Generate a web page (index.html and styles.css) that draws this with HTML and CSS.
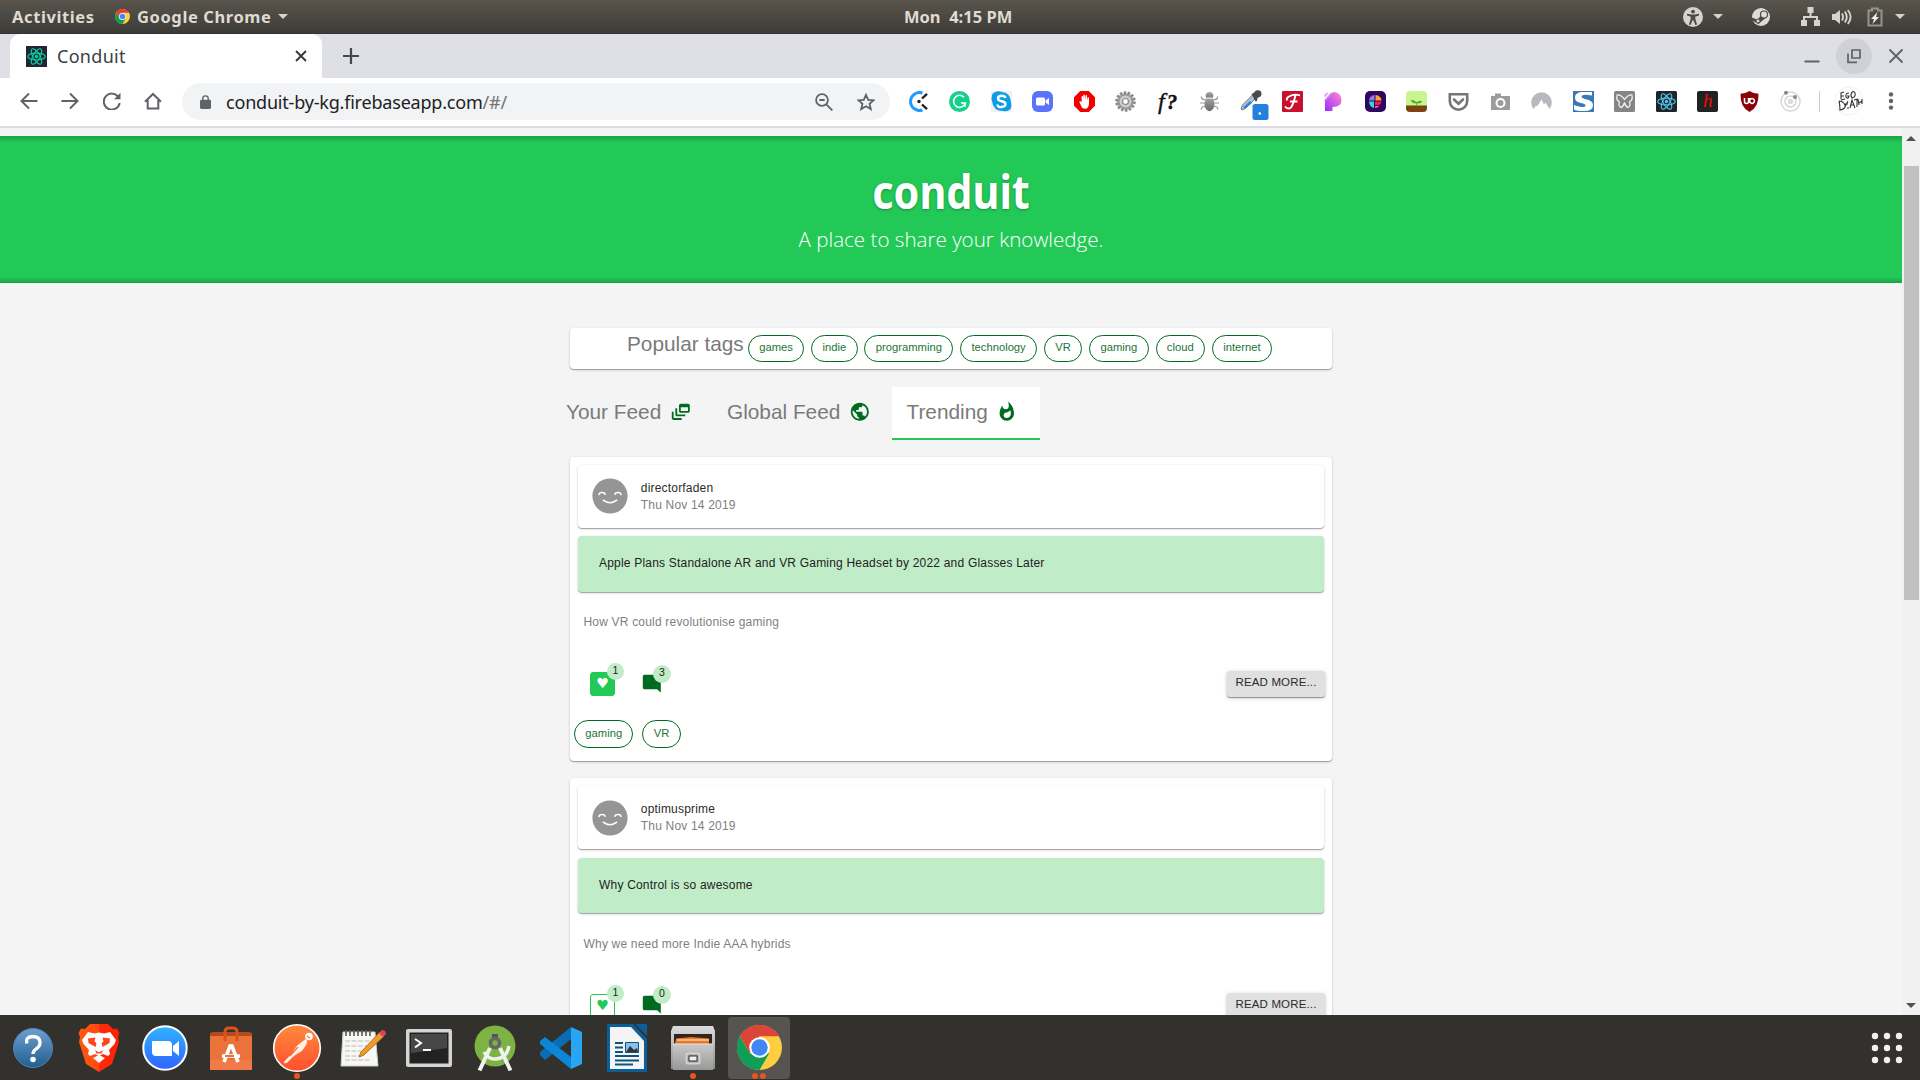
FILE: index.html
```html
<!DOCTYPE html>
<html lang="en">
<head>
<meta charset="utf-8">
<title>Conduit</title>
<link rel="stylesheet" href="styles.css">
</head>
<body>
<svg class="defs" aria-hidden="true">
  <defs>
    <linearGradient id="gBlue" x2="0" y2="1"><stop offset="0" stop-color="#2fb4ff"/><stop offset="1" stop-color="#2f63ff"/></linearGradient>
    <linearGradient id="gHelp" x2="0" y2="1"><stop offset="0" stop-color="#6f9fd0"/><stop offset="1" stop-color="#1f5f8f"/></linearGradient>
    <linearGradient id="gPost" x2="0" y2="1"><stop offset="0" stop-color="#ff8a3c"/><stop offset="1" stop-color="#ff4f2e"/></linearGradient>
    <linearGradient id="gPurple" x1="0" y1="1" x2="1" y2="0"><stop offset="0" stop-color="#9a2bff"/><stop offset="1" stop-color="#ff8ec8"/></linearGradient>
    <linearGradient id="gBrave" x2="1" y2="0"><stop offset="0" stop-color="#ff5a10"/><stop offset=".5" stop-color="#ff4a12"/><stop offset=".5" stop-color="#ff2a0e"/><stop offset="1" stop-color="#ff2000"/></linearGradient>
    <linearGradient id="gFiles" x2="0" y2="1"><stop offset="0" stop-color="#dcdcdc"/><stop offset="1" stop-color="#8d8d8d"/></linearGradient>
    <linearGradient id="gDrawer" x2="0" y2="1"><stop offset="0" stop-color="#c9c9c9"/><stop offset="1" stop-color="#989898"/></linearGradient>
    <linearGradient id="gBug" x2="0" y2="1"><stop offset="0" stop-color="#aaa"/><stop offset="1" stop-color="#666"/></linearGradient>
    <symbol id="react" viewBox="0 0 24 24"><g fill="none" stroke="currentColor" stroke-width="1.3"><ellipse cx="12" cy="12" rx="10" ry="3.9"/><ellipse cx="12" cy="12" rx="10" ry="3.9" transform="rotate(60 12 12)"/><ellipse cx="12" cy="12" rx="10" ry="3.9" transform="rotate(120 12 12)"/></g><circle cx="12" cy="12" r="2" fill="currentColor"/></symbol>
    <symbol id="chrome" viewBox="0 0 48 48"><circle cx="24" cy="24" r="24" fill="#ffcd40"/><path d="M3.2 12A24 24 0 0 1 44.8 12H24L13.6 30z" fill="#db4437"/><path d="M3.2 12A24 24 0 0 0 24 48l10.4-18L24 34 13.6 30z" fill="#0f9d58"/><circle cx="24" cy="24" r="11" fill="#fff"/><circle cx="24" cy="24" r="8.8" fill="#4285f4"/></symbol>
    <symbol id="smile" viewBox="0 0 36 36"><circle cx="18" cy="18" r="17.6" fill="#959595"/><g fill="none" stroke="#fff" stroke-width="1.5" stroke-linecap="round"><path d="M7 16.6q.3-2 3-2t3.100 1.700M22.900 16.300q.4-1.700 3.100-1.700t3 2M11.200 22.200q6.800 5.200 13.600 0"/></g></symbol>
    <symbol id="comment" viewBox="0 0 24 24"><path fill="currentColor" d="M21.990 4c0-1.100-.89-2-1.990-2H4c-1.100 0-2 .9-2 2v12c0 1.100.9 2 2 2h14l4 4-.01-18z"/></symbol>
  </defs>
</svg>

<header class="topbar">
  <span class="activities">Activities</span>
  <svg class="mini-chrome"><use href="#chrome"/></svg>
  <span class="app-name">Google Chrome</span><i class="caret"></i>
  <time class="clock">Mon&nbsp; 4:15 PM</time>
  <div class="status">
    <svg class="s-acc" viewBox="0 0 20 20"><circle cx="10" cy="10" r="10" fill="#d5d3cf"/><g fill="#4c4a44"><circle cx="10" cy="4.600" r="1.900"/><path d="M4 6.800l4.300.8h3.400l4.300-.8v1.700l-3.800 1.200.3 2.800 1.600 5-1.700.4-2-4.700h-.8l-2 4.700-1.700-.4 1.600-5 .3-2.800L4 8.500z"/></g></svg>
    <i class="caret c1"></i>
    <svg class="s-steam" viewBox="0 0 18 18"><circle cx="9" cy="9" r="9" fill="#dddbd7"/><path d="M0 9.500l5.500 2.200 3.500-4.500 5 2.500-5.500 4.500-2 2L0 12z" fill="#4c4a44"/><circle cx="12" cy="6.500" r="3.500" fill="#ddd" stroke="#4c4a44" stroke-width="1.200"/><circle cx="6" cy="13" r="2" fill="#ddd" stroke="#4c4a44"/></svg>
    <svg class="s-net" viewBox="0 0 19 19"><path fill="#d5d3cf" d="M6.500 0h6v6h-2v3h6.500v4h2v6h-6v-6h2v-2h-11v2h2v6H0v-6h2V9h6.500V6h-2z"/></svg>
    <svg class="s-vol" viewBox="0 0 20 16"><path fill="#d5d3cf" d="M0 5h3l5-4v14l-5-4H0z"/><g fill="none" stroke="#d5d3cf" stroke-width="1.900"><path d="M10 4.500q2 3.500 0 7M12.800 2.500q4 5.500 0 11M15.800 1q5.600 7 0 14"/></g></svg>
    <svg class="s-bat" viewBox="0 0 16 20"><path fill="none" stroke="#96938c" stroke-width="2" d="M1.500 3.500H5v-2h6v2h3.500v15h-13z"/><path fill="#eee" d="M10.500 5L4 12h3l-1.500 5L12 10H9z"/></svg>
    <i class="caret c2"></i>
  </div>
</header>

<div class="tabstrip">
  <div class="tab">
    <span class="favicon"><svg><use href="#react"/></svg></span>
    <span class="tab-title">Conduit</span>
    <svg class="tab-close" viewBox="0 0 12 12"><path d="M1 1l10 10M11 1L1 11" stroke="#333" stroke-width="1.800"/></svg>
  </div>
  <svg class="new-tab" viewBox="0 0 16 16"><path d="M8 0v16M0 8h16" stroke="#45484c" stroke-width="2.200"/></svg>
  <div class="win">
    <span class="win-btn"><svg viewBox="0 0 16 16"><path d="M.5 13.500h15" stroke="#5f6368" stroke-width="2"/></svg></span>
    <span class="win-btn hover"><svg viewBox="0 0 16 16"><g fill="none" stroke="#5f6368" stroke-width="1.700"><path d="M6 2h8v8H6z"/><path d="M2 5.500v8.800h9"/></g></svg></span>
    <span class="win-btn"><svg viewBox="0 0 16 16"><path d="M1.500 1.500l13 13M14.500 1.500l-13 13" stroke="#5f6368" stroke-width="1.900"/></svg></span>
  </div>
</div>

<div class="toolbar">
  <div class="nav">
    <span><svg viewBox="0 0 18 18"><path d="M17.500 9H2M9 1.500L1.500 9 9 16.500" /></svg></span>
    <span><svg viewBox="0 0 18 18"><path d="M.5 9H16M9 1.500L16.500 9 9 16.500"/></svg></span>
    <span><svg viewBox="0 0 18 18"><path d="M15.500 5.200A8 8 0 1 0 16.700 11"/><path d="M17.500.8v6.500H11z" class="solid"/></svg></span>
    <span><svg viewBox="0 0 18 18"><path d="M1 9.700L9 2l8 7.700M3.700 8v8.500h10.600V8"/></svg></span>
  </div>
  <div class="omnibox">
    <svg class="lock" viewBox="0 0 12 15"><path fill="#5f6368" d="M1.500 5H10.500Q12 5 12 6.500v7q0 1.500-1.500 1.500h-9Q0 15 0 13.500v-7Q0 5 1.500 5z"/><path d="M3 6V3.800a3 3 0 0 1 6 0V6" fill="none" stroke="#5f6368" stroke-width="1.500"/></svg>
    <span class="url">conduit-by-kg.firebaseapp.com<span class="path">/#/</span></span>
    <svg class="zoomicon" viewBox="0 0 18 18"><circle cx="7" cy="7" r="5.900"/><path d="M11.300 11.300l6 6M4.300 7h5.400"/></svg>
    <svg class="star" viewBox="0 0 18 18"><path d="M9 1.800l2.200 5 5.400.5-4.100 3.500 1.300 5.300L9 13.200l-4.800 2.900 1.300-5.300L1.400 7.300l5.400-.5z"/></svg>
  </div>
  <div class="exts">
    <span><svg viewBox="0 0 21 21"><path d="M14.500 2A9 9 0 1 0 14.500 19" fill="none" stroke="#1e9bff" stroke-width="3"/><circle cx="11" cy="10.500" r="1.700" fill="#222"/><path d="M14 7.500L19 2.800M14 13.500l5 4.700" stroke="#222" stroke-width="2.400"/></svg></span>
    <span><svg viewBox="0 0 21 21"><circle cx="10.500" cy="10.500" r="10.500" fill="#11d18d"/><path d="M15 6.300a6 6 0 1 0 1.300 5.700H12M16 12v4" fill="none" stroke="#fff" stroke-width="1.600"/></svg></span>
    <span><svg viewBox="0 0 21 21"><path fill="#f0f0f0" d="M0 0h21v21H0z"/><path d="M6 .5q3-.5 5 .6Q20 2 20 12q1 3-.5 6-3 3-7 2Q2 20 1 10 0 8 1 4 2 1 6 .5z" fill="#0d9ce8"/><path d="M14.500 7q-.5-2.300-4-2.300T7 7.500q0 2 3.700 2.700t3.800 2.900-3.800 2.900T6.500 13.500" stroke="#fff" stroke-width="2.400" fill="none"/></svg></span>
    <span><svg viewBox="0 0 21 21"><rect width="21" height="21" rx="6" fill="#5b73fa"/><rect x="4" y="6.500" width="9" height="8" rx="1.500" fill="#fff"/><path d="M13.500 9.500l3.500-2.500v7l-3.500-2.500z" fill="#fff"/></svg></span>
    <span><svg viewBox="0 0 21 21"><path d="M6.200 0h8.600L21 6.200v8.600L14.800 21H6.200L0 14.800V6.200z" fill="#f20000"/><path d="M6 10l1.600 1.300V5.500q.8-1 1.500 0V9l.3-5q.7-1 1.400 0l.3 5 .5-4.500q.8-.8 1.400 0V9.500l.7-3q.8-.7 1.300.3v6q-.4 5-4 5-3 0-4-3.300L5.300 11z" fill="#fff"/></svg></span>
    <span><svg viewBox="0 0 21 21"><circle cx="10.500" cy="10.500" r="8.700" fill="#b9b9b9" stroke="#8a8a8a" stroke-width="3.200" stroke-dasharray="2.400 1.500"/><circle cx="10.500" cy="10.500" r="6.600" fill="#ccc" stroke="#888"/><circle cx="10.500" cy="10.500" r="3" fill="#fff" stroke="#888" stroke-width="1.200"/></svg></span>
    <span class="fq"><b>f<small>?</small></b></span>
    <span><svg viewBox="0 0 21 21"><g fill="none" stroke="#999" stroke-width="1.100"><path d="M2 5.500q1 4 5 3M19 5.500q-1 4-5 3M1 12h5M20 12h-5M2 18.500q1-4 5-3M19 18.500q-1-4-5-3"/></g><circle cx="10.500" cy="4.800" r="3.800" fill="url(#gBug)"/><ellipse cx="10.500" cy="13" rx="5" ry="7.200" fill="url(#gBug)"/><path d="M6 7.200h9" stroke="#eee"/></svg></span>
    <span class="dropper"><svg viewBox="0 0 30 30"><path d="M2 19l1.500-4L14 4.500l3.500 3L7 18l-4 2z" fill="#a8c4dc" stroke="#777"/><path d="M4 17.500L11 11l2 2-7 5.500z" fill="#2f84d8"/><path d="M12.500 4l2-1 2.500-2.500q3-1 5 1 1.200 3-.5 5L18.500 8l-.5 3-1.500.5z" fill="#4a4a4a"/><rect x="13.500" y="14" width="16" height="16" rx="2.500" fill="#2480dc"/><circle cx="20.800" cy="23.500" r="1.300" fill="#fff"/></svg></span>
    <span><svg viewBox="0 0 21 21"><rect width="21" height="21" rx="1" fill="#c9102c"/><path d="M7 5.500Q12 2.500 18 4.300M13.500 4q-2 9-4.500 12.500-3.500 2.500-6-1M8 10.500h7.500M7 5.500q-3 1.500-2 4" fill="none" stroke="#fff" stroke-width="1.900"/></svg></span>
    <span><svg viewBox="0 0 21 21"><path d="M2 20V9L10 1q8 0 8.500 7.500T9.500 16v4z" fill="url(#gPurple)"/><path d="M1.500 5.500l3-3.500M1.500 10l7-8" stroke="#d88af5" stroke-width="1.500"/></svg></span>
    <span><svg viewBox="0 0 21 21"><rect width="21" height="21" rx="5" fill="#2f0661"/><path d="M9.500 4v5.500H4Q4.500 4.500 9.500 4z" fill="#8d7bf0"/><path d="M10.500 4q5.500.5 6 5.500h-6z" fill="#ffa51f"/><path d="M10 10.500h6.500Q16 14 13 14h-3z" fill="#ff1658"/><path d="M4 10.500h5v6.500Q4.500 16 4 10.500z" fill="#27dfc1"/><path d="M10 15h4.500q-2 2-4.500 2z" fill="#ff5ba0"/></svg></span>
    <span><svg viewBox="0 0 21 21"><rect width="21" height="21" rx="4" fill="#c8f58f"/><path d="M0 14.500h21V17q0 4-4 4H4q-4 0-4-4z" fill="#7d430e"/><path d="M10.500 14v-3M10.500 12Q6.500 12.500 5 9.500q4-.5 5.500 2.500zM10.500 12q4 .5 5.500-1.500-3.500-1-5.500 1.500z" fill="#3fae1c" stroke="#3fae1c" stroke-width=".8"/></svg></span>
    <span><svg viewBox="0 0 21 21"><path d="M1.800 3.200h17.400V10a8.700 8.700 0 0 1-17.400 0z" fill="none" stroke="#757575" stroke-width="2.600"/><path d="M6 8.500l4.500 4.300L15 8.500" fill="none" stroke="#757575" stroke-width="2.600" stroke-linecap="round"/></svg></span>
    <span><svg viewBox="0 0 21 21"><path d="M1 5h4V2.500h6V5h9v14H1z" fill="#9c9c9c"/><circle cx="10.500" cy="12" r="4" fill="#9c9c9c" stroke="#fff" stroke-width="2"/></svg></span>
    <span><svg viewBox="0 0 21 21"><path d="M2.500 18A10.300 10.300 0 1 1 18.500 18l-4-6.500-1.500 2-2.500-5-4.500 7-1-1z" fill="#b7b9be"/></svg></span>
    <span><svg viewBox="0 0 21 21"><path fill="#3c78b8" d="M0 0h21v21H0z"/><path d="M19 1v3.500Q9 2.500 8.500 5.500 8.500 7.500 14 8.500q6 1.500 6 5.500 0 6.500-10 6-6 0-9-1.500V14q10 3.500 11.500 1 .5-2-4.500-3-6-1-6-5.500 0-5.500 8-5.500z" fill="#fff"/></svg></span>
    <span><svg viewBox="0 0 21 21"><rect width="21" height="21" rx="1.500" fill="#858585"/><path d="M10.500 8.500Q7 3.500 3 4q-1 5 2.500 7-1.500 4 1.500 5.500 2.500-1 3.500-5 1 4 3.500 5 3-1.500 1.500-5.500Q19 9 18 4q-4-.5-7.500 4.500z" fill="none" stroke="#f4f4f4" stroke-width="1.200"/></svg></span>
    <span><svg viewBox="0 0 21 21" color="#4fc3ea"><rect width="21" height="21" rx="1.500" fill="#202327"/><use href="#react" width="21" height="21"/></svg></span>
    <span class="h-ext"><b>h</b></span>
    <span><svg viewBox="0 0 21 21"><path d="M10.500 0q4 2.500 9 2.700Q20 16 10.500 21 1 16 1.500 2.700 6.500 2.500 10.500 0z" fill="#8a0209"/><path d="M5.500 7v3.500q0 2 2 2t2-2V7M13 7.600a2.400 2.400 0 1 0 .1 0M10.700 7v5" fill="none" stroke="#fff" stroke-width="1.500"/></svg></span>
    <span><svg viewBox="0 0 21 21"><g fill="none" stroke="#d6d6d6" stroke-width="1.500"><circle cx="10.500" cy="10.500" r="9.500"/><circle cx="10.500" cy="10.500" r="5.500"/></g><circle cx="10.500" cy="10.500" r="2.700" fill="#dcdcdc"/><circle cx="6" cy="1.800" r="2" fill="#888"/><circle cx="15" cy="6" r="2" fill="#888"/></svg></span>
  </div>
  <i class="sep"></i>
  <svg class="avatar" viewBox="0 0 30 30"><circle cx="15" cy="15" r="14" fill="#fff" stroke="#f1f1f1"/><path d="M7 13V7l3-1M7 10h3M7 14l4-1M15 7q-4 0-3 4 2 3 3-1h-2M18 6q-2 3 0 6 4-1 3-5-1-2-3-1M5 15q1 4 1 9 6-1 5-5-2-4-6-4M14 15l-3 6M11 18h3M13 22h2M16 22l2-8 3 8M17 19h3M20 14l4-1M23 13v8M24 13l1 6M25 17l3-2M28 13v5" fill="none" stroke="#333" stroke-width="1.100"/></svg>
  <svg class="dots" viewBox="0 0 6 18"><g fill="#5f6368"><circle cx="3" cy="2.400" r="2.200"/><circle cx="3" cy="9" r="2.200"/><circle cx="3" cy="15.600" r="2.200"/></g></svg>
</div>

<div class="viewport">
  <div class="page">
    <section class="banner">
      <h1>conduit</h1>
      <p>A place to share your knowledge.</p>
    </section>
    <main class="content">
      <section class="tags-card card">
        <h2>Popular tags</h2>
        <span class="chip">games</span><span class="chip">indie</span><span class="chip">programming</span><span class="chip">technology</span><span class="chip">VR</span><span class="chip">gaming</span><span class="chip">cloud</span><span class="chip">internet</span>
      </section>
      <nav class="feeds">
        <a class="feed f1">Your Feed<svg viewBox="0 0 24 24"><path d="M8 8H6v7c0 1.100.9 2 2 2h9v-2H8V8z"/><path d="M20 3h-8c-1.100 0-2 .9-2 2v6c0 1.100.9 2 2 2h8c1.100 0 2-.9 2-2V5c0-1.100-.9-2-2-2zm0 8h-8V7h8v4z"/><path d="M4 12H2v7c0 1.100.9 2 2 2h9v-2H4v-7z"/></svg></a>
        <a class="feed f2">Global Feed<svg viewBox="0 0 24 24"><path d="M12 2C6.480 2 2 6.480 2 12s4.480 10 10 10 10-4.480 10-10S17.520 2 12 2zm-1 17.930c-3.950-.49-7-3.850-7-7.930 0-.62.08-1.210.21-1.790L9 15v1c0 1.100.9 2 2 2v1.930zm6.900-2.540c-.26-.81-1-1.390-1.900-1.390h-1v-3c0-.55-.45-1-1-1H8v-2h2c.55 0 1-.45 1-1V7h2c1.100 0 2-.9 2-2v-.41c2.930 1.190 5 4.060 5 7.410 0 2.080-.8 3.970-2.100 5.390z"/></svg></a>
        <a class="feed f3 active">Trending<svg viewBox="0 0 24 24"><path d="M13.500.67s.74 2.650.74 4.800c0 2.060-1.350 3.730-3.410 3.730-2.070 0-3.630-1.670-3.630-3.730l.03-.36C5.210 7.510 4 10.620 4 14c0 4.420 3.580 8 8 8s8-3.580 8-8C20 8.610 17.410 3.800 13.500.67zM11.710 19c-1.780 0-3.220-1.400-3.220-3.140 0-1.620 1.050-2.760 2.810-3.120 1.770-.36 3.600-1.210 4.620-2.580.39 1.290.59 2.650.59 4.040 0 2.650-2.150 4.800-4.800 4.800z"/></svg></a>
      </nav>
      <article class="post card">
        <div class="author card"><svg><use href="#smile"/></svg><div><b>directorfaden</b><span>Thu Nov 14 2019</span></div></div>
        <h3 class="card">Apple Plans Standalone AR and VR Gaming Headset by 2022 and Glasses Later</h3>
        <p>How VR could revolutionise gaming</p>
        <div class="actions">
          <span class="like filled"><i>♥</i><em>1</em></span>
          <span class="talk"><svg><use href="#comment"/></svg><em>3</em></span>
          <button>READ MORE...</button>
        </div>
        <div class="chips"><span class="chip">gaming</span><span class="chip">VR</span></div>
      </article>
      <article class="post card">
        <div class="author card"><svg><use href="#smile"/></svg><div><b>optimusprime</b><span>Thu Nov 14 2019</span></div></div>
        <h3 class="card">Why Control is so awesome</h3>
        <p>Why we need more Indie AAA hybrids</p>
        <div class="actions">
          <span class="like"><i>♥</i><em>1</em></span>
          <span class="talk"><svg><use href="#comment"/></svg><em>0</em></span>
          <button>READ MORE...</button>
        </div>
      </article>
    </main>
  </div>
  <div class="scrollbar"><i class="up"></i><i class="thumb"></i><i class="down"></i></div>
</div>

<footer class="dock">
  <span><svg width="42" height="42" viewBox="0 0 42 42"><circle cx="21" cy="21" r="19.500" fill="url(#gHelp)" stroke="#4f84b5"/><path d="M15 16.500Q13 10 20.500 9.500 28 9.500 28 15.500q0 4-4 6.500-3 2-3 5" fill="none" stroke="#fff" stroke-width="3.300"/><circle cx="21" cy="32.500" r="2.800" fill="#fff"/></svg></span>
  <span><svg width="42" height="48" viewBox="0 0 42 48"><path d="M12 0h18l5 5 4-.5 2.500 4.500L40 13l1 5-7 22-13 8-13-8L1 18l1-5L.5 9 3 4.500 7 5z" fill="url(#gBrave)"/><path d="M10 8l6 1.500 5-1 5 1L32 8l6 8-1.500 4L31 26l1 4-2 2-5-2-4 2-4-2-5 2-2-2 1-4-5.500-6L4 16z" fill="#fff"/><path d="M10 14.500l7.500-1-1 4 2 1.500-1 4-7-4zM32 14.500l-7.500-1 1 4-2 1.500 1 4 7-4zM17 26l4 2.500L25 26l-1.500 3.500h-5z" fill="#ff431a"/><path d="M15 34l6-3 6 3-6 5z" fill="#fff"/></svg></span>
  <span><svg width="46" height="46" viewBox="0 0 46 46"><circle cx="23" cy="23" r="21.700" fill="url(#gBlue)" stroke="#fff" stroke-width="2"/><path d="M10 16h16q4 0 4 4v11H14q-4 0-4-4zM31 21l6-5v15l-6-5z" fill="#fff"/></svg></span>
  <span><svg width="44" height="46" viewBox="0 0 44 46"><path d="M1 8l3-1h36l3 1v6H1z" fill="#b64a1b"/><path d="M1 11h42v34H1z" fill="#e9733a"/><path d="M1 35h42v10H1z" fill="#f07b49"/><path d="M16 16V7q0-4 4-4h4q4 0 4 4v9" fill="none" stroke="#d9531e" stroke-width="3"/><path d="M15 37l6-16h2l6 16M13 31h18" stroke="#fff" stroke-width="3.600" fill="none"/><path d="M16 31h9" stroke="#d9531e" stroke-width="1.600"/></svg></span>
  <span><svg width="50" height="50" viewBox="0 0 50 50"><circle cx="25" cy="25" r="23.300" fill="url(#gPost)" stroke="#fff" stroke-width="1.600"/><circle cx="37" cy="13.500" r="3.800" fill="#fff"/><path d="M33.500 16.500L25 23l-5 8-7 7-1 2 3-.5 7-7 8-5 4-6 1-4z" fill="#fff3e8" stroke="#fff" stroke-width=".6"/><path d="M18 33l8-9M35 13l3 2" stroke="#ff6a35" stroke-width="1.200"/></svg><i class="run"></i></span>
  <span><svg width="46" height="42" viewBox="0 0 46 42"><path d="M3 5h32l3 34H1z" fill="#f7f7f5" stroke="#ccc"/><g stroke="#bbb" stroke-width="1.200" stroke-dasharray="5 1.500"><path d="M5 14h26M5 19h22M5 24h16M5 29h14M5 33h26"/></g><path d="M6 3v6M10 3v6M14 3v6M18 3v6M22 3v6M26 3v6M30 3v6" stroke="#555" stroke-width="1.600" /><path d="M40 5l4 4-20 19-5 2 2-5z" fill="#f09a2b" stroke="#b8701a"/><path d="M39 6l3-3q4 0 4 4l-3 3z" fill="#d9455a"/></svg></span>
  <span><svg width="46" height="38" viewBox="0 0 46 38"><rect width="46" height="38" rx="2" fill="#d4d4d4"/><rect x="3.500" y="3.500" width="39" height="31" fill="#222"/><path d="M5 5h36v14L5 24z" fill="#474747"/><path d="M9 10l6 4-6 4.500M17 21h8" fill="none" stroke="#fff" stroke-width="2"/></svg></span>
  <span><svg width="42" height="48" viewBox="0 0 42 48"><circle cx="21" cy="22" r="20.500" fill="#7cb342"/><path d="M16 24L5.500 46.500M26 24l10.500 22.500" stroke="#f1f1f1" stroke-width="4"/><path d="M10 28q4 7.500 12 7 11-1 13-13" stroke="#f1f1f1" stroke-width="3.500" fill="none"/><path d="M18 10h6v5h-6z" fill="#555"/><circle cx="21" cy="19" r="4.500" fill="none" stroke="#666" stroke-width="3.600"/></svg></span>
  <span><svg width="44" height="44" viewBox="0 0 44 44"><path d="M32 1l11 5v32l-11 5z" fill="#2aa4f4"/><path d="M32 1v12L6 34l-5-5v-3z" fill="#0a6db4"/><path d="M32 43V31L6 11l-5 4v3z" fill="#0c86d6"/></svg></span>
  <span><svg width="42" height="50" viewBox="0 0 42 50"><path d="M2 1h25l14 15v33H1V2z" fill="#0b5f98"/><path d="M4 4h21l13 14v28H4z" fill="#f4f4f4"/><path d="M29 1h11q1 0 1 1v11z" fill="#0b5f98"/><path d="M9 20h8M9 24.500h8M9 29h8M9 33h24M9 37.500h24M9 41.500h18" stroke="#0b5580" stroke-width="2"/><path d="M19.500 19.500h13v10h-13z" fill="#85c1ef" stroke="#0b5580"/><path d="M20 29l4-6 4 4 3-2 1 4z" fill="#333"/></svg></span>
  <span><svg width="44" height="46" viewBox="0 0 44 46"><path d="M2 1h40l2 5v38H0V6z" fill="url(#gFiles)"/><path d="M3 9h38v10H3z" fill="#33251b"/><path d="M5 13.500l15-1.500 18 1.500V19H4z" fill="#e9762b"/><path d="M6 15h32" stroke="#ffe2b8" stroke-width="1.200"/><path d="M2 19h40v26H2z" fill="url(#gDrawer)"/><path d="M2 19h40" stroke="#e3e3e3"/><rect x="15.500" y="28.500" width="13" height="10" rx="1.500" fill="#999" stroke="#d2d2d2" stroke-width="2"/><path d="M18 31h8v5h-8z" fill="#eee" stroke="#333"/></svg><i class="run"></i></span>
  <span class="current"><svg width="45" height="45"><use href="#chrome"/></svg><i class="run two"></i></span>
  <svg class="grid" width="32" height="32" viewBox="0 0 32 32"><g fill="#f2f1ee"><circle cx="4" cy="4" r="3.200"/><circle cx="16" cy="4" r="3.200"/><circle cx="28" cy="4" r="3.200"/><circle cx="4" cy="16" r="3.200"/><circle cx="16" cy="16" r="3.200"/><circle cx="28" cy="16" r="3.200"/><circle cx="4" cy="28" r="3.200"/><circle cx="16" cy="28" r="3.200"/><circle cx="28" cy="28" r="3.200"/></g></svg>
</footer>
</body>
</html>
```
FILE: styles.css
```css
* { box-sizing: border-box; }
html, body { margin: 0; height: 100%; }
body {
  display: flex;
  flex-direction: column;
  width: 1920px;
  height: 1080px;
  overflow: hidden;
  background: #f4f4f4;
  font-family: "Liberation Sans", Arial, sans-serif;
}
.defs { position: absolute; width: 0; height: 0; }
i, em { font-style: normal; }

/* desktop top bar */
.topbar {
  display: grid;
  grid-template-columns: 103px 22px 137px 1fr auto;
  align-items: center;
  flex: none;
  position: relative;
  height: 34px;
  padding-left: 12px;
  background: linear-gradient(#59554d, #3d3b37);
  border-bottom: 1px solid #38313a;
  color: #dfdbd2;
  font: 700 16.500px/33px "Noto Sans", sans-serif;
  white-space: nowrap;
}
.activities, .app-name { letter-spacing: .6px; }
.mini-chrome { width: 15px; height: 15px; }
.clock { position: absolute; left: 904px; top: 0; }
.caret {
  width: 0;
  border: 5px solid transparent;
  border-top-color: #d5d3cf;
  border-bottom: 0;
  margin-left: 4px;
}
.status { display: flex; align-items: center; width: 237px; height: 33px; }
.status svg { flex: none; }
.s-acc { width: 20px; height: 20px; }
.status .c1 { margin: 0 0 0 10px; }
.s-steam { width: 18px; height: 18px; margin-left: 29px; }
.s-net { width: 19px; height: 19px; margin-left: 31px; }
.s-vol { width: 20px; height: 16px; margin-left: 12px; }
.s-bat { width: 16px; height: 20px; margin-left: 15px; }
.status .c2 { margin: 0 0 0 12px; }

/* browser tab strip */
.tabstrip {
  display: flex;
  align-items: center;
  flex: none;
  height: 44px;
  padding-left: 10px;
  background: #dee0e6;
}
.tab {
  display: flex;
  align-items: center;
  width: 312px;
  height: 44px;
  padding: 0 15px 0 16px;
  background: #fff;
  border-radius: 10px 10px 0 0;
}
.favicon { width: 21px; height: 21px; background: #222533; color: #08d0a0; }
.favicon svg { display: block; width: 21px; height: 21px; }
.tab-title { flex: 1; padding-left: 10px; font: 18px/44px "Noto Sans", sans-serif; letter-spacing: .3px; color: #3c4043; }
.tab-close { width: 12px; height: 12px; }
.new-tab { width: 16px; height: 16px; margin-left: 21px; }
.win { display: flex; gap: 6px; margin-left: auto; padding-right: 6px; }
.win-btn { display: grid; place-items: center; width: 36px; height: 36px; border-radius: 50%; }
.win-btn svg { width: 16px; height: 16px; }
.win-btn.hover { background: #d0d1d6; }

/* browser toolbar */
.toolbar {
  display: flex;
  align-items: center;
  flex: none;
  height: 50px;
  padding: 0 0 2px 8px;
  background: #fff;
  border-bottom: 2px solid #dcdce1;
}
.nav { display: flex; }
.nav span { display: grid; place-items: center; width: 41.500px; height: 40px; }
.nav svg { width: 18px; height: 18px; fill: none; stroke: #5f6368; stroke-width: 2; }
.nav .solid { fill: #5f6368; stroke: none; }
.omnibox {
  display: flex;
  align-items: center;
  width: 708px;
  height: 37px;
  margin: 1px 0 0 8px;
  padding: 0 15px 0 18px;
  border-radius: 19px;
  background: #f1f3f4;
}
.lock { width: 11px; height: 14px; }
.url { flex: 1; padding-left: 15px; font: 18px/36px "Noto Sans", sans-serif; letter-spacing: -.2px; color: #202124; }
.path { color: #70757a; }
.zoomicon, .star { width: 18px; height: 18px; fill: none; stroke: #5f6368; stroke-width: 1.800; }
.star { margin-left: 24px; }
.exts { display: flex; margin-left: 7.400px; }
.exts span { display: grid; place-items: center; width: 41.570px; height: 40px; }
.exts svg { width: 21px; height: 21px; }
.exts .fq b { font: italic 400 24px/36px "Liberation Serif", serif; color: #111; -webkit-text-stroke: .4px #111; }
.fq small { margin-left: 2px; font-size: 21px; font-weight: 700; }
.exts .dropper { place-items: start; padding: 9px 0 0 9px; }
.exts .dropper svg { width: 30px; height: 30px; }
.h-ext b { width: 21px; height: 21px; border-radius: 2px; background: #222; color: #f00c0c; font: italic 400 19px/20px "Liberation Serif", serif; text-align: center; }
.sep { width: 1px; height: 21px; margin-left: 7.600px; background: #ccc; }
.avatar { width: 30px; height: 30px; margin-left: 14px; }
.dots { width: 6px; height: 18px; margin-left: 24px; }

/* page */
.viewport { display: flex; flex: none; height: 887px; overflow: hidden; }
.page { width: 1902px; padding-top: 8px; overflow: hidden; }
.banner {
  height: 147px;
  padding-top: 23px;
  background: linear-gradient(rgba(0,0,0,.2), transparent 7px, transparent 141px, rgba(0,0,0,.2)) #23c957;
  color: #fff;
  text-align: center;
}
.banner h1 { margin: 0; font: 700 47px/64px "Noto Sans", sans-serif; text-shadow: 0 1px 3px rgba(0,0,0,.3); transform: scaleX(.88); }
.banner p { margin: 0; font: 300 20.600px/32px "Open Sans", sans-serif; }
.content { width: 762px; margin: 45px auto 0; }
.card {
  border-radius: 4px;
  background: #fff;
  box-shadow: 0 1px 0 rgba(0,0,0,.24), 0 1px 3px rgba(0,0,0,.2);
}
.tags-card { display: flex; gap: 6.900px; height: 41px; padding: 7px 0 0 57px; }
.tags-card h2 { width: 114px; margin: -3px 0 0; white-space: nowrap; font-size: 20.800px; line-height: 24px; font-weight: 400; color: #7a7a7a; }
.chip {
  height: 27px;
  padding: 0 10.350px;
  border: 1px solid #006b1f;
  border-radius: 14px;
  color: #1c7533;
  font-size: 11.220px;
  line-height: 23px;
}
.feeds { display: flex; width: 500px; height: 53px; margin: 18px 0 16.800px -19px; }
.feed { display: flex; align-items: center; padding: 0 0 3px 15px; font-size: 20.800px; color: #7a7a7a; white-space: nowrap; }
.feed svg { width: 21.600px; height: 21.600px; margin-left: 8.500px; fill: #006b1f; }
.f1 { width: 161px; }
.f2 { width: 180px; }
.f3 { width: 148px; }
.feed.active { padding: 0 0 1px 14.500px; background: #fff; border-bottom: 2px solid #23c957; }
.post { height: 304.500px; margin-bottom: 17px; padding: 8.100px 8px; }
.author { display: flex; align-items: center; height: 62.800px; padding-left: 13.500px; }
.author svg { width: 36px; height: 36px; }
.author b, .author span { display: block; font-size: 12px; line-height: 17px; letter-spacing: .19px; font-weight: 400; color: #2c2c2c; }
.author div { padding: .8px 0 0 13.300px; }
.author div span { color: #808080; }
.post h3 { height: 55.700px; margin: 8.400px 0 0; padding: .4px 0 0 21px; background: #c1ecc8; font-size: 12px; line-height: 55px; letter-spacing: .2px; font-weight: 400; color: #222; }
.post p { margin: 20.400px 0 0 5.500px; font-size: 12px; line-height: 20px; letter-spacing: .19px; color: #808080; }
.actions { display: flex; height: 26px; margin-top: 39.100px; padding-left: 12px; }
.like, .talk { position: relative; }
.like { width: 25px; height: 24px; margin-top: 1px; border: 1px solid #23c957; border-radius: 3px; color: #23c957; text-align: center; }
.like i { display: block; font: 14px/20px "DejaVu Sans", sans-serif; }
.like.filled { background: #23c957; color: #fff; }
.actions em { position: absolute; width: 17px; height: 17px; border-radius: 50%; background: #c1ecc8; color: #222; font-size: 10.500px; line-height: 15px; text-align: center; }
.like em { left: 16px; top: -10px; }
.talk { width: 22px; height: 22px; margin: 1.500px 0 0 26px; }
.talk svg { width: 21.600px; height: 21.600px; color: #006b1f; }
.talk em { left: 12px; top: -8px; width: 18px; height: 18px; }
.actions button {
  width: 98px;
  height: 26px;
  margin: 0 -1px 0 auto;
  padding: 0 0 4px;
  border: 0;
  border-radius: 3px;
  background: #e0e0e0;
  box-shadow: 0 1px 1px rgba(0,0,0,.35), 0 1px 4px rgba(0,0,0,.2);
  color: #2b2b2b;
  font: 11.500px/20px "Liberation Sans", Arial, sans-serif;
  letter-spacing: .15px;
  white-space: nowrap;
}
.chips { display: flex; gap: 9px; margin: 23px 0 0 -4px; }
.chips .chip { height: 28px; line-height: 24px; }
.scrollbar { display: flex; flex-direction: column; align-items: center; width: 18px; background: #f1f1f1; }
.up, .down { width: 0; border: 5px solid transparent; }
.up { margin-top: 3px; border-bottom-color: #505050; }
.down { margin: auto 0 2px; border-top-color: #505050; }
.thumb { width: 15px; height: 434px; margin-top: 25px; background: #c1c1c1; }

/* dock */
.dock { display: flex; flex: none; height: 65px; background: #32312d; }
.dock span { position: relative; display: grid; place-items: center; width: 66px; height: 65px; }
.dock .current::before { content: ""; position: absolute; left: 2px; top: 2px; width: 62px; height: 62px; border-radius: 4px; background: #565450; }
.dock .current svg { position: relative; }
.run { position: absolute; left: 30px; bottom: 1px; width: 6px; height: 6px; border-radius: 50%; background: #e95420; }
.run.two { left: 26px; box-shadow: 8px 0 #e95420; }
.grid { margin: 17px 17px 0 auto; }
```
